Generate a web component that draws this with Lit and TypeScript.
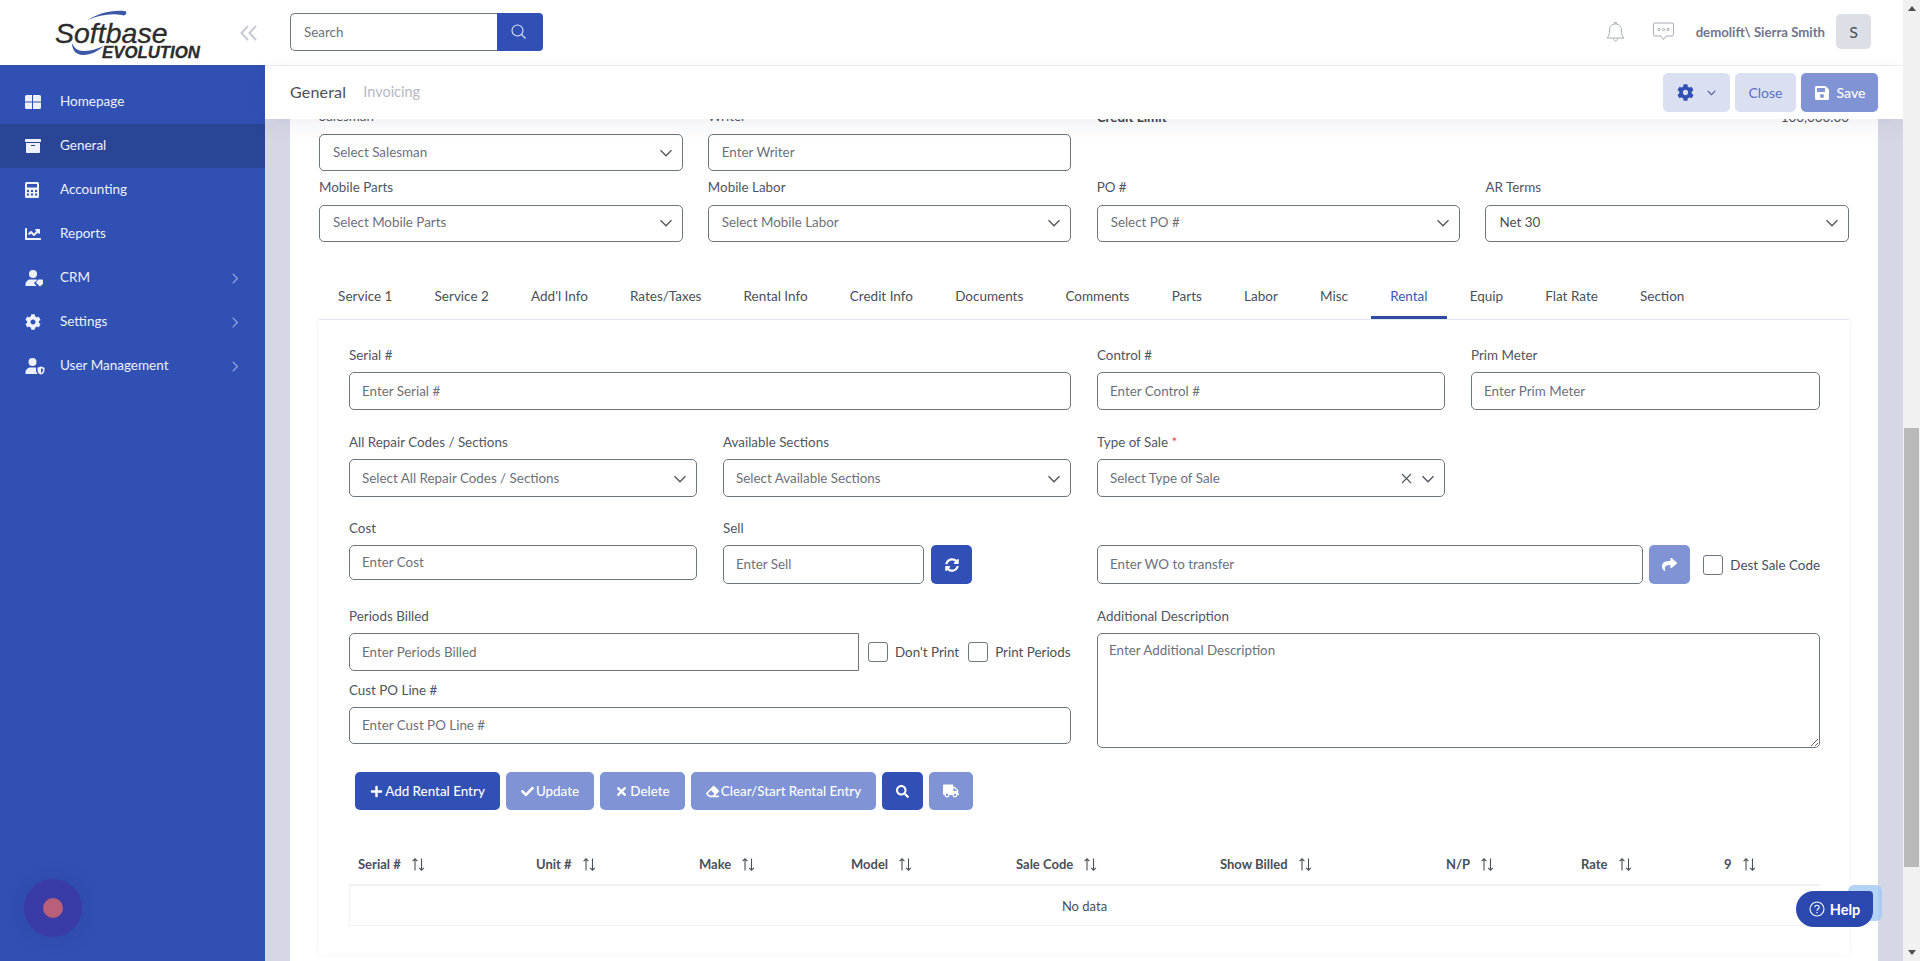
import { LitElement, css, html, svg } from 'lit';
import { customElement } from 'lit/decorators.js';

const ICONS: Record<string, { box: string; d: string }> = {
    archive: { box: "0 0 512 512", d: "M32 448c0 17.7 14.3 32 32 32h384c17.7 0 32-14.3 32-32V160H32v288zm160-212c0-6.6 5.4-12 12-12h104c6.6 0 12 5.4 12 12v8c0 6.6-5.4 12-12 12H204c-6.6 0-12-5.4-12-12v-8zM480 32H32C14.3 32 0 46.3 0 64v48c0 8.8 7.2 16 16 16h480c8.8 0 16-7.2 16-16V64c0-17.7-14.3-32-32-32z" },
    chart: { box: "0 0 512 512", d: "M496 384H64V80c0-8.84-7.16-16-16-16H16C7.16 64 0 71.16 0 80v336c0 17.67 14.33 32 32 32h464c8.84 0 16-7.16 16-16v-32c0-8.84-7.16-16-16-16zM464 96H345.94c-21.38 0-32.09 25.85-16.97 40.97l32.4 32.4L288 242.75l-73.37-73.37c-12.5-12.5-32.76-12.5-45.25 0l-68.69 68.69c-6.25 6.25-6.25 16.38 0 22.63l22.62 22.62c6.25 6.25 16.38 6.25 22.63 0L192 237.25l73.37 73.37c12.5 12.5 32.76 12.5 45.25 0l96-96 32.4 32.4c15.12 15.12 40.97 4.41 40.97-16.97V112c.01-8.84-7.15-16-15.99-16z" },
    cog: { box: "0 0 512 512", d: "M487.4 315.7l-42.6-24.6c4.3-23.2 4.3-47 0-70.2l42.6-24.6c4.9-2.8 7.1-8.6 5.5-14-11.1-35.6-30-67.8-54.7-94.6-3.8-4.1-10-5.1-14.8-2.3L380.8 110c-17.9-15.4-38.5-27.3-60.8-35.1V25.8c0-5.6-3.9-10.5-9.4-11.7-36.7-8.2-74.3-7.8-109.2 0-5.5 1.2-9.4 6.1-9.4 11.7V75c-22.2 7.9-42.8 19.8-60.8 35.1L88.7 85.5c-4.9-2.8-11-1.9-14.8 2.3-24.7 26.7-43.6 58.9-54.7 94.6-1.7 5.4.6 11.2 5.5 14L67.3 221c-4.3 23.2-4.3 47 0 70.2l-42.6 24.6c-4.9 2.8-7.1 8.6-5.5 14 11.1 35.6 30 67.8 54.7 94.6 3.8 4.1 10 5.1 14.8 2.3l42.6-24.6c17.9 15.4 38.5 27.3 60.8 35.1v49.2c0 5.6 3.9 10.5 9.4 11.7 36.7 8.2 74.3 7.8 109.2 0 5.5-1.2 9.4-6.1 9.4-11.7v-49.2c22.2-7.9 42.8-19.8 60.8-35.1l42.6 24.6c4.9 2.8 11 1.9 14.8-2.3 24.7-26.7 43.6-58.9 54.7-94.6 1.5-5.5-.7-11.3-5.6-14.1zM256 336c-44.1 0-80-35.9-80-80s35.9-80 80-80 80 35.9 80 80-35.9 80-80 80z" },
    save: { box: "0 0 448 512", d: "M433.941 129.941l-83.882-83.882A48 48 0 0 0 316.118 32H48C21.49 32 0 53.49 0 80v352c0 26.51 21.49 48 48 48h352c26.51 0 48-21.49 48-48V163.882a48 48 0 0 0-14.059-33.941zM224 416c-35.346 0-64-28.654-64-64 0-35.346 28.654-64 64-64s64 28.654 64 64c0 35.346-28.654 64-64 64zm96-304.52V212c0 6.627-5.373 12-12 12H76c-6.627 0-12-5.373-12-12V108c0-6.627 5.373-12 12-12h228.52c3.183 0 6.235 1.264 8.485 3.515l3.48 3.48A11.996 11.996 0 0 1 320 111.48z" },
    sync: { box: "0 0 512 512", d: "M370.72 133.28C339.458 104.008 298.888 87.962 255.848 88c-77.458.068-144.328 53.178-162.791 126.85-1.344 5.363-6.122 9.15-11.651 9.15H24.103c-7.498 0-13.194-6.807-11.807-14.176C33.933 94.924 134.813 8 256 8c66.448 0 126.791 26.136 171.315 68.685L463.03 40.97C478.149 25.851 504 36.559 504 57.941V192c0 13.255-10.745 24-24 24H345.941c-21.382 0-32.09-25.851-16.971-40.971l41.75-41.749zM32 296h134.059c21.382 0 32.09 25.851 16.971 40.971l-41.75 41.75c31.262 29.273 71.835 45.319 114.876 45.28 77.418-.07 144.315-53.144 162.787-126.849 1.344-5.363 6.122-9.15 11.651-9.15h57.304c7.498 0 13.194 6.807 11.807 14.176C478.067 417.076 377.187 504 256 504c-66.448 0-126.791-26.136-171.315-68.685L48.97 471.03C33.851 486.149 8 475.441 8 454.059V320c0-13.255 10.745-24 24-24z" },
    share: { box: "0 0 512 512", d: "M503.691 189.836L327.687 37.851C312.281 24.546 288 35.347 288 56.015v80.053C127.371 137.907 0 170.1 0 322.326c0 61.441 39.581 122.309 83.333 154.132 13.653 9.931 33.111-2.533 28.077-18.631C66.066 312.814 132.917 274.316 288 272.085V360c0 20.7 24.3 31.453 39.687 18.164l176.004-152c11.071-9.562 11.086-26.753 0-36.328z" },
    search: { box: "0 0 512 512", d: "M505 442.7L405.3 343c-4.5-4.5-10.6-7-17-7H372c27.6-35.3 44-79.7 44-128C416 93.1 322.9 0 208 0S0 93.1 0 208s93.1 208 208 208c48.3 0 92.7-16.4 128-44v16.3c0 6.4 2.5 12.5 7 17l99.7 99.7c9.4 9.4 24.6 9.4 33.9 0l28.3-28.3c9.4-9.4 9.4-24.6.1-34zM208 336c-70.7 0-128-57.2-128-128 0-70.7 57.2-128 128-128 70.7 0 128 57.2 128 128 0 70.7-57.2 128-128 128z" },
    truck: { box: "0 0 640 512", d: "M624 352h-16V243.9c0-12.7-5.1-24.9-14.1-33.9L494 110.1c-9-9-21.2-14.1-33.9-14.1H416V48c0-26.5-21.5-48-48-48H48C21.5 0 0 21.5 0 48v320c0 26.5 21.5 48 48 48h16c0 53 43 96 96 96s96-43 96-96h128c0 53 43 96 96 96s96-43 96-96h48c8.8 0 16-7.2 16-16v-32c0-8.8-7.2-16-16-16zM160 464c-26.5 0-48-21.5-48-48s21.5-48 48-48 48 21.5 48 48-21.5 48-48 48zm320 0c-26.5 0-48-21.5-48-48s21.5-48 48-48 48 21.5 48 48-21.5 48-48 48zm80-208H416V144h44.1l99.9 99.9V256z" },
    eraser: { box: "0 0 512 512", d: "M497.941 273.941c18.745-18.745 18.745-49.137 0-67.882l-160-160c-18.745-18.745-49.137-18.745-67.882 0l-256 256c-18.745 18.745-18.745 49.137 0 67.882l96 96A48.004 48.004 0 0 0 144 480h356c6.627 0 12-5.373 12-12v-40c0-6.627-5.373-12-12-12H355.883l142.058-142.059zm-302.627-62.627l137.373 137.373L265.373 416H150.628l-80-80 124.686-124.686z" },
    plus: { box: "0 0 448 512", d: "M416 208H272V64c0-17.67-14.33-32-32-32h-32c-17.67 0-32 14.33-32 32v144H32c-17.67 0-32 14.33-32 32v32c0 17.67 14.33 32 32 32h144v144c0 17.67 14.33 32 32 32h32c17.67 0 32-14.33 32-32V304h144c17.67 0 32-14.33 32-32v-32c0-17.67-14.33-32-32-32z" },
    check: { box: "0 0 512 512", d: "M173.898 439.404l-166.4-166.4c-9.997-9.997-9.997-26.206 0-36.204l36.203-36.204c9.997-9.998 26.207-9.998 36.204 0L192 312.69 432.095 72.596c9.997-9.997 26.207-9.997 36.204 0l36.203 36.204c9.997 9.997 9.997 26.206 0 36.204l-294.4 294.401c-9.998 9.997-26.207 9.997-36.204-.001z" },
    times: { box: "0 0 352 512", d: "M242.72 256l100.07-100.07c12.28-12.28 12.28-32.19 0-44.48l-22.24-22.24c-12.28-12.28-32.19-12.28-44.48 0L176 189.28 75.93 89.21c-12.28-12.28-32.19-12.28-44.48 0L9.21 111.45c-12.28 12.28-12.28 32.19 0 44.48L109.28 256 9.21 356.07c-12.28 12.28-12.28 32.19 0 44.48l22.24 22.24c12.28 12.28 32.2 12.28 44.48 0L176 322.72l100.07 100.07c12.28 12.28 32.2 12.28 44.48 0l22.24-22.24c12.28-12.28 12.28-32.19 0-44.48L242.72 256z" },
};

const icon = (name: string, size: number) => html`
    <svg class="fa" width=${size} height=${size} viewBox=${ICONS[name].box} fill="currentColor" fill-rule="evenodd">
        <path d=${ICONS[name].d}></path>
    </svg>`;

const chevronDown = html`
    <svg class="chev" width="14" height="14" viewBox="0 0 14 14" fill="none" stroke="currentColor" stroke-width="1.3">
        <path d="M1.5 4.2 7 9.8l5.5-5.6"></path>
    </svg>`;

const sortIcon = html`
    <svg class="sort" width="13" height="13" viewBox="0 0 13 13" fill="none" stroke="#495057" stroke-width="1.1">
        <path d="M3 12.5V.8M.6 3.2 3 .8l2.4 2.4M9.5.5v11.7M7.1 9.8l2.4 2.4 2.4-2.4"></path>
    </svg>`;

const windowsIcon = svg`<path d="M0 1.5A1.5 1.5 0 0 1 1.5 0H7v6.5H0zM8 0h6.5A1.5 1.5 0 0 1 16 1.5v5H8zM0 7.5h7V14H1.5A1.5 1.5 0 0 1 0 12.5zM8 7.5h8v5a1.5 1.5 0 0 1-1.5 1.5H8z"></path>`;
const calculatorIcon = svg`<path fill-rule="evenodd" d="M1.5 0h11A1.5 1.5 0 0 1 14 1.5v13a1.5 1.5 0 0 1-1.5 1.5h-11A1.5 1.5 0 0 1 0 14.5v-13A1.5 1.5 0 0 1 1.5 0zM2 2v3.5h10V2zm0 6v2h2V8zm4 0v2h2V8zm4 0v2h2V8zM2 11.5v2h2v-2zm4 0v2h2v-2zm4 0v2h2v-2z"></path>`;
const crmIcon = svg`<circle cx="7.5" cy="4" r="4"></circle><path d="M0 16v-1.5C0 11.5 2.5 9.5 5 9.5h5c.8 0 1.3.2 1.8.4L8.5 13l2.5 3z"></path><path d="M13 9.5h3.5a1 1 0 0 1 1 1V14l-3 2.5L11 13.2a1 1 0 0 1 0-1.4z"></path>`;
const userShieldIcon = svg`<circle cx="7" cy="4" r="4"></circle><path d="M0 16v-1.5C0 11.5 2.5 9.5 5 9.5h4.5c.4 0 .7 0 1 .1V12c0 1.7.7 3 1.8 4z"></path><path fill-rule="evenodd" d="M15.5 8.5l3.5 1.2V12c0 2.4-1.5 4-3.5 4.6-2-.6-3.5-2.2-3.5-4.6V9.7zm0 1.7v4.7c1.2-.5 2-1.5 2-2.9v-1.1z"></path>`;

const MENU = [
    { label: "Homepage", view: "0 0 16 14", w: 16, h: 14, art: windowsIcon },
    { label: "General", name: "archive", size: 16, active: true },
    { label: "Accounting", view: "0 0 14 16", w: 14, h: 16, art: calculatorIcon },
    { label: "Reports", name: "chart", size: 16 },
    { label: "CRM", view: "0 0 18 17", w: 19, h: 17, art: crmIcon, arrow: true },
    { label: "Settings", name: "cog", size: 16, arrow: true },
    { label: "User Management", view: "0 0 19 17", w: 20, h: 17, art: userShieldIcon, arrow: true },
];

const TABS = ["Service 1", "Service 2", "Add'l Info", "Rates/Taxes", "Rental Info", "Credit Info", "Documents", "Comments", "Parts", "Labor", "Misc", "Rental", "Equip", "Flat Rate", "Section"];
const COLUMNS = ["Serial #", "Unit #", "Make", "Model", "Sale Code", "Show Billed", "N/P", "Rate", "9"];
const ACTIONS = [
    { label: "Add Rental Entry", name: "plus", solid: true, width: 145 },
    { label: "Update", name: "check", width: 88 },
    { label: "Delete", name: "times", width: 85 },
    { label: "Clear/Start Rental Entry", name: "eraser", width: 185 },
    { label: "", name: "search", solid: true, width: 41 },
    { label: "", name: "truck", width: 44 },
];

@customElement("app-root")
export class AppRoot extends LitElement {

    static styles = css`

    :host {
        display: block;
        width: 1920px;
        height: 961px;
        overflow: hidden;
        position: relative;
        font-family: "Lato", "Noto Sans", sans-serif;
        font-size: 13.4px;
        color: #495057;
    }

    * { box-sizing: border-box; }

    .fa { display: block; flex: none; }

    .app { display: flex; height: 100%; }

    /* sidebar */
    .sidebar {
        width: 265px;
        flex: none;
        background: #3150b4;
        display: flex;
        flex-direction: column;
    }
    .brand {
        height: 65px;
        background: #fff;
        display: flex;
        align-items: center;
        flex: none;
    }
    .logo { display: block; }
    .logo text { stroke: #2c2c2c; stroke-width: .3px; }
    .collapse { margin-left: 2px; }
    .menu { padding-top: 15px; }
    .item {
        height: 44px;
        display: flex;
        align-items: center;
        padding: 0 27px 0 25px;
        color: #eef1fb;
        font-size: 13.5px;
    }
    .item.active { background: #2b4596; }
    .item-icon { width: 35px; flex: none; display: flex; align-items: center; }
    .item-label { flex: 1; padding-bottom: 2px; }
    .item-arrow { color: #93a5e0; }

    /* main column */
    .content { flex: 1; min-width: 0; display: flex; flex-direction: column; }
    .topbar {
        height: 66px;
        background: #fff;
        border-bottom: 1px solid #eceef3;
        display: flex;
        align-items: center;
        padding: 0 32px 2px 25px;
        flex: none;
    }
    .search { display: flex; width: 253px; height: 38px; }
    .search input {
        flex: 1;
        min-width: 0;
        border: 1px solid #70747c;
        border-right: 0;
        border-radius: 5px 0 0 5px;
        padding: 0 13px;
        font: inherit;
        outline: none;
    }
    .search button {
        width: 46px;
        border: 0;
        background: #3050b5;
        color: #dfe5f7;
        border-radius: 0 4px 4px 0;
        display: flex;
        align-items: center;
        justify-content: center;
        padding: 0 4px 0 0;
    }
    .top-right { margin-left: auto; display: flex; align-items: center; }
    .bell { margin-right: 28px; }
    .bubble { margin-right: 22px; }
    .user { font-weight: 700; color: #72758a; font-size: 13.2px; margin-right: 11px; }
    .avatar {
        width: 35px;
        height: 35px;
        border-radius: 5px;
        background: #dcdfe5;
        display: flex;
        align-items: center;
        justify-content: center;
        font-size: 16px;
        color: #495057;
    }

    .subbar {
        height: 53px;
        background: #fff;
        display: flex;
        align-items: center;
        padding: 0 25px;
        flex: none;
        position: relative;
        z-index: 2;
        box-shadow: 0 6px 22px rgba(30, 40, 80, .07);
    }
    .crumb { font-size: 16px; color: #495057; letter-spacing: .2px; padding-bottom: 2px; }
    .crumb-sub { font-size: 14.5px; color: #b5b8c4; margin-left: 17px; padding-bottom: 2px; }
    .bar-actions { margin-left: auto; display: flex; gap: 5px; }
    .bar-btn {
        height: 39px;
        border: 0;
        border-radius: 5px;
        display: flex;
        align-items: center;
        justify-content: center;
        font: inherit;
        font-size: 14px;
        padding: 0;
    }
    .bar-gear { width: 67px; background: #dae0f2; color: #3050b5; gap: 13px; }
    .bar-gear .chev { color: #495a90; }
    .bar-close { width: 61px; background: #dae0f2; color: #5a70bf; }
    .bar-save { width: 77px; background: #7f93d5; color: #fff; gap: 7px; font-weight: 500; }

    /* scrolled page */
    .main {
        flex: 1;
        min-height: 0;
        overflow: hidden;
        background: #d5d7e6;
        padding: 0 25px;
    }
    .card {
        background: #fff;
        margin-top: -12px;
        height: 900px;
        padding: 0 29px;
    }
    .head-grid {
        display: grid;
        grid-template-columns: repeat(4, 363.5px);
        column-gap: 25.33px;
        row-gap: 6.5px;
    }
    .label { display: block; line-height: 18px; padding-bottom: 2px; color: #50565e; }
    .req { color: #e5484d; }
    .control {
        display: flex;
        align-items: center;
        width: 100%;
        height: 38px;
        border: 1px solid #70747c;
        border-radius: 5px;
        background: #fff;
        padding: 0 12px 2px;
        font: inherit;
        color: #6c7179;
        outline: none;
    }
    input.control::placeholder, textarea.control::placeholder, .search input::placeholder { color: #6c7179; opacity: 1; }
    .control .value { flex: 1; white-space: nowrap; }
    .control .dark { color: #495057; }
    .control .chev { color: #50565e; margin-right: -3px; margin-bottom: -2px; }
    .control .clear { color: #50565e; margin-right: 9px; margin-bottom: -2px; }
    .field .control { margin-top: 7px; }
    .head-grid .control { height: 37px; padding-left: 13px; }
    .limit {
        grid-column: span 2;
        display: flex;
        justify-content: space-between;
        line-height: 20px;
    }
    .limit b { color: #3d4349; }

    .tabs {
        display: flex;
        gap: 4px;
        height: 45px;
        margin-top: 32.5px;
    }
    .tab {
        padding: 3px 19.1px 1px;
        display: flex;
        align-items: center;
        color: #495057;
        font-size: 13.5px;
        border-bottom: 3px solid transparent;
        white-space: nowrap;
    }
    .tab.active { color: #3a57b6; border-bottom-color: #2f4a9f; }

    .panel {
        border-top: 1px solid #e4e7f2;
        padding: 25px 29px 0 30px;
        box-shadow: 0 0 8px rgba(40, 50, 90, .05);
        height: 634px;
    }
    .panel .label { line-height: 20px; padding-bottom: 0; }
    .panel .control { padding-bottom: 1px; }
    .grid {
        display: grid;
        grid-template-columns: 348px 348px 348px 349px;
        column-gap: 26px;
        margin-bottom: 22px;
    }
    .grid.tight { margin-bottom: 21px; }
    .span2 { grid-column: span 2; }
    .span3 { grid-column: 3 / span 2; }
    .row-sell { display: flex; gap: 7px; margin-top: 7px; }
    .row-sell .control { margin-top: 0; height: 39px; }
    .row-sell .sell { width: 201px; }
    .field .cost { height: 35px; }
    .square {
        height: 39px;
        width: 41px;
        border: 0;
        border-radius: 5px;
        background: #3050b5;
        color: #fff;
        display: flex;
        align-items: center;
        justify-content: center;
        flex: none;
        padding: 0;
    }
    .square.light { background: #7f93d5; }
    .transfer { display: flex; align-items: center; padding-top: 27px; }
    .transfer .control { flex: 1; height: 39px; min-width: 0; }
    .transfer .square { margin-left: 6px; }
    .transfer .check-label { margin-left: 13px; }
    .check-label { display: flex; align-items: center; white-space: nowrap; gap: 7px; }
    .check-label input {
        appearance: none;
        margin: 0;
        width: 20px;
        height: 20px;
        border: 1px solid #70747c;
        border-radius: 3px;
        background: #fff;
        flex: none;
    }
    .periods { display: flex; align-items: center; gap: 9px; margin-top: 7px; }
    .periods .control { margin-top: 0; width: 510px; flex: none; border-radius: 5px 0 0 5px; }
    .cust { margin-top: 9px; }
    .cust .control { height: 37px; }
    .panel textarea.control {
        display: block;
        height: 115px;
        padding: 8px 11px;
        resize: both;
        margin-top: 7px;
        width: 723px;
    }

    .actions {
        display: flex;
        gap: 6px;
        padding-left: 6px;
        margin-top: 24px;
    }
    .action {
        height: 38px;
        border: 0;
        border-radius: 5px;
        background: #7f93d5;
        color: #fff;
        font: inherit;
        font-weight: 500;
        display: flex;
        align-items: center;
        justify-content: center;
        gap: 2px;
        padding: 0;
    }
    .action.solid { background: #3050b5; }

    .table { margin-top: 34px; width: 1471px; }
    .thead {
        display: grid;
        grid-template-columns: 178px 163px 152px 165px 204px 226px 135px 143px 105px;
        height: 42px;
        border-bottom: 2px solid #eff0f4;
        align-items: center;
    }
    .th {
        display: flex;
        align-items: center;
        gap: 11px;
        padding-left: 9px;
        font-size: 13px;
        font-weight: 700;
        color: #495057;
    }
    .empty {
        height: 40px;
        display: flex;
        align-items: center;
        justify-content: center;
        border: 1px solid #f1f2f5;
        border-top: 0;
        font-size: 13px;
    }

    /* page scrollbar */
    .scroll {
        width: 17px;
        flex: none;
        background: #f1f1f1;
        display: flex;
        flex-direction: column;
        align-items: center;
        justify-content: space-between;
        position: relative;
        z-index: 3;
    }
    .thumb { position: absolute; top: 428px; left: 1px; width: 15px; height: 439px; background: #b9b9b9; }
    .arrow { width: 0; height: 0; border-left: 4px solid transparent; border-right: 4px solid transparent; margin: 6px 0; }
    .arrow.up { border-bottom: 5px solid #505050; }
    .arrow.down { border-top: 5px solid #505050; }

    /* floating widgets */
    .record {
        position: absolute;
        left: 24px;
        top: 879px;
        width: 58px;
        height: 58px;
        border-radius: 50%;
        background: #3a3ba6;
        box-shadow: 0 0 20px rgba(40, 50, 120, .25);
        display: flex;
        align-items: center;
        justify-content: center;
    }
    .record span { width: 20px; height: 20px; border-radius: 50%; background: #b8607a; }
    .help-back {
        position: absolute;
        left: 1848px;
        top: 885px;
        width: 34px;
        height: 36px;
        border-radius: 6px;
        background: rgba(160, 200, 245, .8);
    }
    .help {
        position: absolute;
        left: 1796px;
        top: 891px;
        width: 77px;
        height: 36px;
        border-radius: 18px 4px 16px 18px;
        background: #2a48ae;
        color: #fff;
        display: flex;
        align-items: center;
        justify-content: center;
        gap: 5px;
        font-weight: 700;
        font-size: 14.5px;
        z-index: 4;
    }
    `;

    private sidebar() {
        return html`
            <aside class="sidebar">
                <div class="brand">
                    <svg class="logo" width="238" height="65" viewBox="0 0 238 65">
                        <path fill="#3b57a8" d="M88 20c9-6 22-10 36-9 2 0 3 1 2 3-1 1-2 2-4 1-11-2-23 0-34 5z"></path>
                        <path fill="#3b57a8" d="M72 43c2 5 6 8 11 8 7 0 14-2 21-5-6 5-13 9-21 9-7 0-11-5-11-12z"></path>
                        <text x="55" y="43" font-family="Liberation Sans" font-style="italic" font-size="28.5" fill="#2c2c2c">Softbase</text>
                        <text x="102" y="58" font-family="Liberation Sans" font-style="italic" font-weight="700" font-size="16.8" fill="#2c2c2c">EVOLUTION</text>
                    </svg>
                    <svg class="collapse" width="17" height="16" viewBox="0 0 17 16" fill="none" stroke="#c6cad4" stroke-width="2">
                        <path d="M8 1 1.5 8 8 15M16 1 9.5 8l6.5 7"></path>
                    </svg>
                </div>
                <nav class="menu">
                    ${MENU.map(m => html`
                        <div class="item ${m.active ? "active" : ""}">
                            <span class="item-icon">
                                ${m.name
                                    ? icon(m.name, m.size as number)
                                    : html`<svg class="fa" width=${m.w} height=${m.h} viewBox=${m.view} fill="currentColor">${m.art}</svg>`}
                            </span>
                            <span class="item-label">${m.label}</span>
                            ${m.arrow ? html`
                                <svg class="item-arrow" width="6" height="11" viewBox="0 0 6 11" fill="none" stroke="currentColor" stroke-width="1.2">
                                    <path d="M.7.7 5.3 5.5.7 10.3"></path>
                                </svg>` : ""}
                        </div>
                    `)}
                </nav>
            </aside>
        `;
    }

    private topbar() {
        return html`
            <header class="topbar">
                <div class="search">
                    <input placeholder="Search" />
                    <button>
                        <svg width="15" height="15" viewBox="0 0 15 15" fill="none" stroke="currentColor" stroke-width="1.1">
                            <circle cx="6.5" cy="6.5" r="5.5"></circle>
                            <path d="M10.5 10.5 14.5 14.5"></path>
                        </svg>
                    </button>
                </div>
                <div class="top-right">
                    <svg class="bell" width="19" height="21" viewBox="0 0 19 21" fill="none" stroke="#a9acb4" stroke-width="1">
                        <path d="M1 17c2-2 2.5-4 2.5-8 0-3.5 2.5-6 6-6s6 2.5 6 6c0 4 .5 6 2.5 8zM7.5 17.5c0 1.5 1 2.5 2 2.5s2-1 2-2.5M8.5 3V1.5h2V3"></path>
                    </svg>
                    <svg class="bubble" width="21" height="19" viewBox="0 0 21 19" fill="none" stroke="#a9acb4" stroke-width="1">
                        <path d="M2 1h17a1.5 1.5 0 0 1 1.5 1.5v10A1.5 1.5 0 0 1 19 14h-6l-2.5 3.5L8 14H2A1.5 1.5 0 0 1 .5 12.5v-10A1.5 1.5 0 0 1 2 1z"></path>
                        <circle cx="6" cy="7.5" r="1.2"></circle>
                        <circle cx="10.5" cy="7.5" r="1.2"></circle>
                        <circle cx="15" cy="7.5" r="1.2"></circle>
                    </svg>
                    <span class="user">demolift\\ Sierra Smith</span>
                    <span class="avatar">S</span>
                </div>
            </header>
            <div class="subbar">
                <span class="crumb">General</span>
                <span class="crumb-sub">Invoicing</span>
                <div class="bar-actions">
                    <button class="bar-btn bar-gear">
                        ${icon("cog", 17)}
                        <svg class="chev" width="9" height="6" viewBox="0 0 9 6" fill="none" stroke="currentColor" stroke-width="1.1">
                            <path d="M.7.8 4.5 4.6 8.3.8"></path>
                        </svg>
                    </button>
                    <button class="bar-btn bar-close">Close</button>
                    <button class="bar-btn bar-save">${icon("save", 16)}Save</button>
                </div>
            </div>
        `;
    }

    private select(text: string, opts: { clear?: boolean; dark?: boolean } = {}) {
        return html`
            <div class="control">
                <span class="value ${opts.dark ? "dark" : ""}">${text}</span>
                ${opts.clear ? html`
                    <svg class="clear" width="11" height="11" viewBox="0 0 11 11" fill="none" stroke="currentColor" stroke-width="1.1">
                        <path d="M1 1l9 9M10 1l-9 9"></path>
                    </svg>` : ""}
                ${chevronDown}
            </div>
        `;
    }

    private form() {
        return html`
            <div class="grid">
                <div class="field span2">
                    <span class="label">Serial #</span>
                    <input class="control" placeholder="Enter Serial #" />
                </div>
                <div class="field">
                    <span class="label">Control #</span>
                    <input class="control" placeholder="Enter Control #" />
                </div>
                <div class="field">
                    <span class="label">Prim Meter</span>
                    <input class="control" placeholder="Enter Prim Meter" />
                </div>
            </div>
            <div class="grid tight">
                <div class="field">
                    <span class="label">All Repair Codes / Sections</span>
                    ${this.select("Select All Repair Codes / Sections")}
                </div>
                <div class="field">
                    <span class="label">Available Sections</span>
                    ${this.select("Select Available Sections")}
                </div>
                <div class="field">
                    <span class="label">Type of Sale <span class="req">*</span></span>
                    ${this.select("Select Type of Sale", { clear: true })}
                </div>
            </div>
            <div class="grid">
                <div class="field">
                    <span class="label">Cost</span>
                    <input class="control cost" placeholder="Enter Cost" />
                </div>
                <div>
                    <span class="label">Sell</span>
                    <div class="row-sell">
                        <input class="control sell" placeholder="Enter Sell" />
                        <button class="square">${icon("sync", 14)}</button>
                    </div>
                </div>
                <div class="transfer span3">
                    <input class="control" placeholder="Enter WO to transfer" />
                    <button class="square light">${icon("share", 15)}</button>
                    <label class="check-label"><input type="checkbox" />Dest Sale Code</label>
                </div>
            </div>
            <div class="grid">
                <div class="span2">
                    <span class="label">Periods Billed</span>
                    <div class="periods">
                        <input class="control" placeholder="Enter Periods Billed" />
                        <label class="check-label"><input type="checkbox" />Don't Print</label>
                        <label class="check-label"><input type="checkbox" />Print Periods</label>
                    </div>
                    <div class="field cust">
                        <span class="label">Cust PO Line #</span>
                        <input class="control" placeholder="Enter Cust PO Line #" />
                    </div>
                </div>
                <div class="span3">
                    <span class="label">Additional Description</span>
                    <textarea class="control" placeholder="Enter Additional Description"></textarea>
                </div>
            </div>
        `;
    }

    private table() {
        return html`
            <div class="actions">
                ${ACTIONS.map(a => html`
                    <button class="action ${a.solid ? "solid" : ""}" style="width: ${a.width}px">
                        ${icon(a.name, a.name === "truck" ? 16 : 13)}${a.label}
                    </button>
                `)}
            </div>
            <div class="table">
                <div class="thead">
                    ${COLUMNS.map(c => html`<div class="th">${c}${sortIcon}</div>`)}
                </div>
                <div class="empty">No data</div>
            </div>
        `;
    }

    render() {

        return html`
            <div class="app">
                ${this.sidebar()}
                <div class="content">
                    ${this.topbar()}
                    <main class="main">
                        <div class="card">
                            <div class="head-grid">
                                <div class="field">
                                    <span class="label">Salesman</span>
                                    ${this.select("Select Salesman")}
                                </div>
                                <div class="field">
                                    <span class="label">Writer</span>
                                    <input class="control" placeholder="Enter Writer" />
                                </div>
                                <div class="limit"><b>Credit Limit</b><span>100,000.00</span></div>
                                <div class="field">
                                    <span class="label">Mobile Parts</span>
                                    ${this.select("Select Mobile Parts")}
                                </div>
                                <div class="field">
                                    <span class="label">Mobile Labor</span>
                                    ${this.select("Select Mobile Labor")}
                                </div>
                                <div class="field">
                                    <span class="label">PO #</span>
                                    ${this.select("Select PO #")}
                                </div>
                                <div class="field">
                                    <span class="label">AR Terms</span>
                                    ${this.select("Net 30", { dark: true })}
                                </div>
                            </div>
                            <div class="tabs">
                                ${TABS.map(t => html`<div class="tab ${t === "Rental" ? "active" : ""}">${t}</div>`)}
                            </div>
                            <div class="panel">
                                ${this.form()}
                                ${this.table()}
                            </div>
                        </div>
                    </main>
                </div>
                <div class="scroll">
                    <span class="arrow up"></span>
                    <span class="thumb"></span>
                    <span class="arrow down"></span>
                </div>
            </div>
            <div class="record"><span></span></div>
            <div class="help-back"></div>
            <div class="help">
                <svg width="16" height="16" viewBox="0 0 16 16" fill="none" stroke="currentColor" stroke-width="1.1">
                    <circle cx="8" cy="8" r="7"></circle>
                    <path d="M5.8 6.3C5.8 5 6.8 4.2 8 4.2s2.2.8 2.2 2c0 1.8-2.2 1.8-2.2 3.5M8 11v1.3"></path>
                </svg>
                Help
            </div>
        `;

    }

}
